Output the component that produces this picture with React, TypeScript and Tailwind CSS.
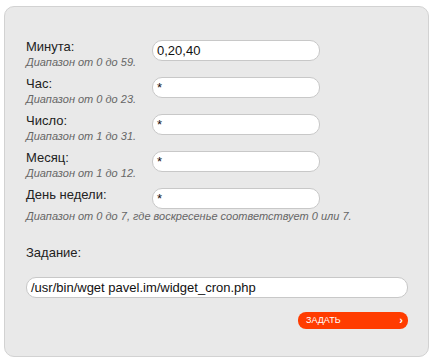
import React from "react";

const rows = [
  { label: "Минута:", hint: "Диапазон от 0 до 59.", value: "0,20,40" },
  { label: "Час:", hint: "Диапазон от 0 до 23.", value: "*" },
  { label: "Число:", hint: "Диапазон от 1 до 31.", value: "*" },
  { label: "Месяц:", hint: "Диапазон от 1 до 12.", value: "*" },
];

export default function App() {
  return (
    <div className="w-[435px] h-[364px] bg-white pt-[6px] pl-[4px]" style={{ fontFamily: '"Liberation Sans", Arial, sans-serif' }}>
      <div className="w-[425px] h-[351px] bg-[#e9e9e9] border border-[#d2d2d2] rounded-[10px] pt-[33px] pl-[21px] text-[#222]">
        {rows.map((r) => (
          <div key={r.label} className="flex h-[37px]">
            <div className="w-[126px] flex flex-col">
              <div className="text-[13px] leading-[14px]">{r.label}</div>
              <div className="text-[11px] leading-[15px] mt-[1px] italic text-[#666]">{r.hint}</div>
            </div>
            <div className="w-[168px] h-[21px] bg-white border border-[#c8c8c8] rounded-[10px] pl-[4px] text-[13px] leading-[19px] text-[#111]">
              {r.value}
            </div>
          </div>
        ))}
        <div className="flex h-[21px]">
          <div className="w-[126px] text-[13px] leading-[14px]">День недели:</div>
          <div className="w-[168px] h-[21px] bg-white border border-[#c8c8c8] rounded-[10px] pl-[4px] text-[13px] leading-[19px] text-[#111]">
            *
          </div>
        </div>
        <div className="text-[11px] leading-[15px] italic text-[#666]">
          Диапазон от 0 до 7, где воскресенье соответствует 0 или 7.
        </div>
        <div className="text-[13px] leading-[14px] mt-[22px]">Задание:</div>
        <div className="w-[382px] h-[21px] mt-[17px] bg-white border border-[#c8c8c8] rounded-[10px] pl-[4px] text-[13px] leading-[19px] text-[#111]">
          /usr/bin/wget pavel.im/widget_cron.php
        </div>
        <div className="flex justify-end w-[382px] mt-[14px]">
          <div className="w-[110px] h-[17px] bg-[#ff3c00] rounded-[8px] flex items-center justify-between pl-[8px] pr-[5px] text-white text-[9px] leading-[17px]">
            <span>ЗАДАТЬ</span>
            <span className="text-[11px] font-bold leading-[17px]">›</span>
          </div>
        </div>
      </div>
    </div>
  );
}
